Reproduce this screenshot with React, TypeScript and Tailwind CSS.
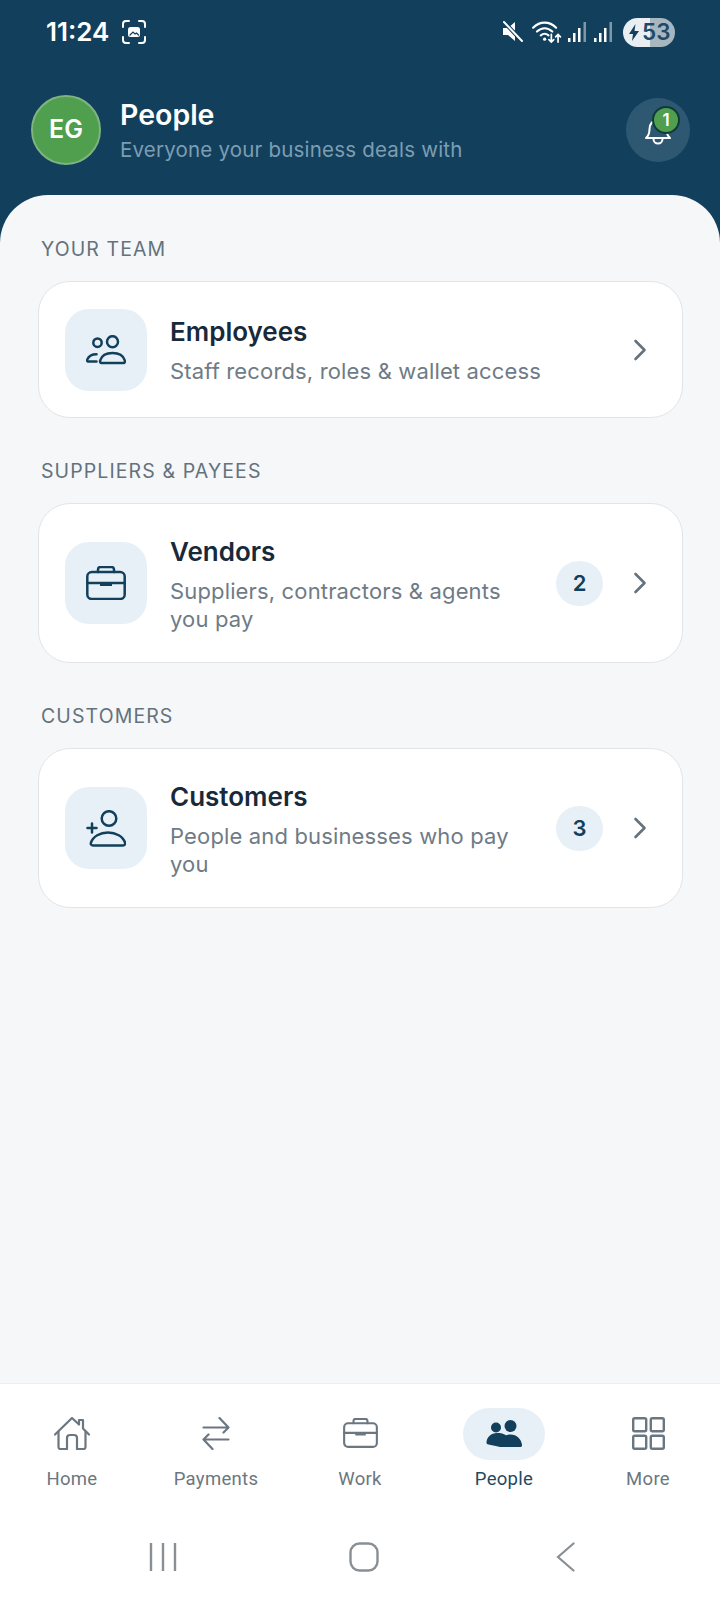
import React from "react";

const font = { fontFamily: '"Inter","Noto Sans",sans-serif' };

function Shot() {
  return (
    <svg width="24" height="24" viewBox="0 0 24 24" fill="none" stroke="#fff" strokeWidth="2" strokeLinecap="round">
      <path d="M1 7V4a3 3 0 0 1 3-3h3M17 1h3a3 3 0 0 1 3 3v3M23 17v3a3 3 0 0 1-3 3h-3M7 23H4a3 3 0 0 1-3-3v-3" />
      <rect x="6" y="7" width="12" height="10" rx="2.500" fill="#fff" stroke="none" />
      <path d="M8 15l3-3 2 2 1.500-1 2 2" stroke="#12405c" strokeWidth="1.200" />
    </svg>
  );
}

function Mute() {
  return (
    <svg width="22" height="22" viewBox="0 0 22 22" fill="#fff">
      <path d="M0 7h5l7-6v19l-7-6H0z" transform="translate(1 0)" />
      <path d="M2 1l18 19" stroke="#12405c" strokeWidth="4" />
      <path d="M2 1l18 19" stroke="#fff" strokeWidth="2" strokeLinecap="round" />
    </svg>
  );
}

function Wifi() {
  return (
    <svg width="31" height="23" viewBox="0 0 32 24" fill="none" stroke="#fff" strokeWidth="2.200" strokeLinecap="round">
      <path d="M1 7c7-7 17-7 24 0M5 11c5-4.500 11-4.500 16 0M9 15c3-2.500 5-2.500 8 0" />
      <circle cx="13" cy="19" r="1.700" fill="#fff" stroke="none" />
      <path d="M20 14v8M17.500 19.500l2.500 2.500 2.500-2.500M27 22v-8M24.500 16.500l2.500-2.500 2.500 2.500" strokeWidth="1.800" />
    </svg>
  );
}

function Signal() {
  return (
    <svg width="19" height="20" viewBox="0 0 19 20" fill="#fff">
      <rect x="0" y="16" width="2.500" height="4" />
      <rect x="5" y="11" width="2.500" height="9" />
      <rect x="10" y="6" width="2.500" height="14" />
      <rect x="15.500" y="0" width="2.500" height="20" fill="#7f97a6" />
    </svg>
  );
}

function StatusBar() {
  return (
    <div className="flex h-[64px] items-center pl-[46px] pr-[45px]">
      <span className="text-[26px] font-semibold leading-none text-white">11:24</span>
      <span className="ml-[13px] flex"><Shot /></span>
      <div className="ml-auto flex items-center">
        <Mute />
        <span className="ml-[8px] flex"><Wifi /></span>
        <span className="ml-[5px] flex"><Signal /></span>
        <span className="ml-[7px] flex"><Signal /></span>
        <div className="ml-[10px] flex h-[29px] w-[52px] items-center rounded-full bg-[linear-gradient(90deg,#e9eef2_52%,#a8b6c0_52%)] pl-[6px]">
          <svg width="10" height="17" viewBox="0 0 10 17" fill="#12405c"><path d="M6.500 0L0 10h4l-1 7 7-10H5.500z" /></svg>
          <span className="ml-[3px] text-[22.500px] font-semibold leading-none text-[#1f4a66]">53</span>
        </div>
      </div>
    </div>
  );
}

function Bell() {
  return (
    <svg width="28" height="32" viewBox="0 0 28 32" fill="none" stroke="#fff" strokeWidth="2" strokeLinejoin="round" strokeLinecap="round">
      <path d="M2 23c3-2.500 3.500-5 3.500-9C5.500 8.500 9 5 14 5s8.500 3.500 8.500 9c0 4 .5 6.500 3.500 9z" />
      <path d="M9.500 24a4.500 4.500 0 0 0 9 0" />
    </svg>
  );
}

function Header() {
  return (
    <div className="h-[195px] shrink-0">
      <StatusBar />
      <div className="mt-[31px] flex items-center pl-[31px] pr-[30px]">
        <div className="flex h-[70px] w-[70px] items-center justify-center rounded-full border-[2px] border-[#7fb481] bg-[#4f9f4f] text-[25px] font-semibold text-white">
          EG
        </div>
        <div className="ml-[19px] flex-1">
          <div className="text-[28.500px] font-semibold leading-[36px] text-white">People</div>
          <div className="mt-[3px] text-[20.500px] leading-[28px] tracking-[0.2px] text-[#7d9db3]">Everyone your business deals with</div>
        </div>
        <div className="relative flex h-[64px] w-[64px] items-center justify-center rounded-full bg-[#2e5872]">
          <span className="mt-[2px] flex"><Bell /></span>
          <div className="absolute left-[26px] top-[8px] flex h-[28px] w-[28px] items-center justify-center rounded-full border-[2px] border-[#0f3a38] bg-[#4f9f4f] text-[17px] font-semibold leading-none text-white">
            1
          </div>
        </div>
      </div>
    </div>
  );
}

function IconEmployees() {
  return (
    <svg width="40" height="30" viewBox="0 0 40 30" fill="none" stroke="#12405c" strokeWidth="2.500" strokeLinejoin="round" strokeLinecap="round">
      <circle cx="11.500" cy="7.700" r="4.200" />
      <circle cx="26.500" cy="6.700" r="5.500" />
      <path d="M15.500 28c-1.200 0-1.800-1.200-1.200-2.800C15.800 20.500 20.500 18 26.500 18s10.700 2.500 12.200 7.200c.6 1.600 0 2.800-1.200 2.800z" />
      <path d="M1.800 26.500h8.700M1.800 26.500c-.8-.4-.8-1.400-.4-2.200 1.300-3 4.800-5 9.100-5" />
    </svg>
  );
}

function Case({ color, w, sw }: { color: string; w: number; sw: number }) {
  return (
    <svg width={w} viewBox="0 0 40 34" fill="none" stroke={color} strokeWidth={sw} strokeLinejoin="round" strokeLinecap="round">
      <rect x="1.300" y="6" width="37.400" height="27" rx="4.500" />
      <path d="M12 6V3.500A2.500 2.500 0 0 1 14.500 1h11A2.500 2.500 0 0 1 28 3.500V6" />
      <path d="M1.300 17h37.400" />
      <rect x="14" y="17" width="12" height="3" fill={color} stroke="none" />
    </svg>
  );
}

function IconCustomers() {
  return (
    <svg width="40" height="37" viewBox="0 0 40 37" fill="none" stroke="#12405c" strokeWidth="2.500" strokeLinejoin="round" strokeLinecap="round">
      <circle cx="23" cy="8.500" r="7.300" />
      <path d="M8 35.500c-1.700 0-2.600-1.400-2-3C8 26.500 15 22.500 23 22.500s15 4 17 10c.5 1.600-.3 3-2 3z" transform="translate(-1 0)" />
      <path d="M1.500 18h9M6 13.500v9" />
    </svg>
  );
}

function Row({ icon, title, sub, badge }: { icon: React.ReactNode; title: string; sub: string; badge?: string }) {
  return (
    <div className="flex items-center rounded-[32px] border border-[#e1e5ea] bg-white py-[26.500px] pl-[26px] pr-[35px]">
      <div className="flex h-[82px] w-[82px] shrink-0 items-center justify-center rounded-[24px] bg-[#e8f0f7]">{icon}</div>
      <div className="ml-[23px] min-w-0 flex-1 py-[3px] pr-[24px]">
        <div className="text-[26px] font-semibold leading-[36px] text-[#17293a]">{title}</div>
        <div className="mt-[7px] text-[22px] leading-[28px] tracking-[0.15px] text-[#6f7b85]">{sub}</div>
      </div>
      {badge && (
        <div className="mr-[30px] flex h-[45px] w-[47px] shrink-0 items-center justify-center rounded-full bg-[#e8f0f7] text-[22px] font-semibold text-[#12405c]">
          {badge}
        </div>
      )}
      <svg width="14" height="22" viewBox="0 0 14 22" fill="none" stroke="#66727c" strokeWidth="2.600" strokeLinecap="round" strokeLinejoin="round" className="shrink-0">
        <path d="M2.500 2l9 9-9 9" />
      </svg>
    </div>
  );
}

function Section({ label, children }: { label: string; children: React.ReactNode }) {
  return (
    <div>
      <div className="mb-[20px] ml-[3px] text-[19.500px] leading-[24px] tracking-[1.100px] text-[#64727d]">{label}</div>
      {children}
    </div>
  );
}

function NavItem({ label, icon, active }: { label: string; icon: React.ReactNode; active?: boolean }) {
  return (
    <div className="flex flex-1 flex-col items-center">
      <div className={`flex h-[52px] w-[82px] items-center justify-center rounded-full ${active ? "bg-[#e8f0f7]" : ""}`}>{icon}</div>
      <div className={`mt-[6px] text-[18.500px] leading-[26px] tracking-[0.3px] ${active ? "text-[#1f4a62]" : "text-[#6b7780]"}`} style={{ fontFamily: "Roboto,sans-serif" }}>
        {label}
      </div>
    </div>
  );
}

const gray = "#6b7780";

export default function App() {
  return (
    <div className="flex h-[1600px] w-[720px] flex-col overflow-hidden bg-[#12405c]" style={font}>
      <Header />
      <main className="flex flex-1 flex-col gap-[41px] rounded-t-[48px] bg-[#f5f7f9] pl-[38px] pr-[37px] pt-[42px]">
        <Section label="YOUR TEAM">
          <Row icon={<IconEmployees />} title="Employees" sub="Staff records, roles & wallet access" />
        </Section>
        <Section label="SUPPLIERS & PAYEES">
          <Row icon={<Case color="#12405c" w={40} sw={2.5} />} title="Vendors" sub="Suppliers, contractors & agents you pay" badge="2" />
        </Section>
        <Section label="CUSTOMERS">
          <Row icon={<IconCustomers />} title="Customers" sub="People and businesses who pay you" badge="3" />
        </Section>
      </main>
      <footer className="h-[217px] shrink-0 border-t border-[#eceff2] bg-white">
        <div className="flex pt-[24px]">
          <NavItem
            label="Home"
            icon={
              <svg width="36" height="33" viewBox="0 0 36 33" fill="none" stroke={gray} strokeWidth="2.200" strokeLinejoin="round" strokeLinecap="round" className="mb-[2px]">
                <path d="M1 17.500L18 1l7 6.500V3h4v8.500l6 6" />
                <path d="M4.500 14.500V30a2 2 0 0 0 2 2H13V21a3 3 0 0 1 3-3h4a3 3 0 0 1 3 3v11h6.500a2 2 0 0 0 2-2V14.500" />
              </svg>
            }
          />
          <NavItem
            label="Payments"
            icon={
              <svg width="28" height="33" viewBox="0 0 28 33" fill="none" stroke={gray} strokeWidth="2.200" strokeLinejoin="round" strokeLinecap="round" className="mb-[2px]">
                <path d="M1.500 10.500H26.500M17.500 1l9 9.500-5 5" />
                <path d="M26.500 22.500H1.500M10.500 32l-9-9.500 5-5" />
              </svg>
            }
          />
          <NavItem label="Work" icon={<span className="mb-[2px] flex"><Case color={gray} w={35} sw={2.4} /></span>} />
          <NavItem
            active
            label="People"
            icon={
              <svg width="36" height="27" viewBox="0 0 36 27" fill="#12405c" className="mb-[2px]">
                <circle cx="10" cy="7.500" r="5" />
                <circle cx="24.500" cy="6" r="6" />
                <path d="M12 26.500H14c.5-5 4-9.500 7-10.500-3-2.500-6.500-3-10-3C5 13 1 17 .5 22c-.2 1.500.5 2.500 2 2.500z" />
                <path d="M14 27c-1.500 0-2-1-1.500-2.500C14 19 18 14.500 24.500 14.500S35 19 36 24.500c.2 1.500-.5 2.500-2 2.500z" />
              </svg>
            }
          />
          <NavItem
            label="More"
            icon={
              <svg width="33" height="33" viewBox="0 0 33 33" fill="none" stroke={gray} strokeWidth="2.400" className="mb-[2px]">
                <rect x="1.200" y="1.200" width="13" height="13" rx="1.500" />
                <rect x="18.800" y="1.200" width="13" height="13" rx="1.500" />
                <rect x="1.200" y="18.800" width="13" height="13" rx="1.500" />
                <rect x="18.800" y="18.800" width="13" height="13" rx="1.500" />
              </svg>
            }
          />
        </div>
        <div className="mt-[50px] flex items-center pl-[149px]">
          <svg width="28" height="28" viewBox="0 0 28 28" stroke="#8a8f93" strokeWidth="2.400" fill="none">
            <path d="M2 0v28M14 0v28M26 0v28" />
          </svg>
          <svg width="30" height="30" viewBox="0 0 30 30" fill="none" stroke="#8a8f93" strokeWidth="2.400" className="ml-[172px]">
            <rect x="1.500" y="1.500" width="27" height="27" rx="9" />
          </svg>
          <svg width="19" height="30" viewBox="0 0 19 30" fill="none" stroke="#8a8f93" strokeWidth="2.200" strokeLinecap="round" className="ml-[177px]">
            <path d="M17.500 1.500L2 15l15.500 13.500" />
          </svg>
        </div>
      </footer>
    </div>
  );
}
